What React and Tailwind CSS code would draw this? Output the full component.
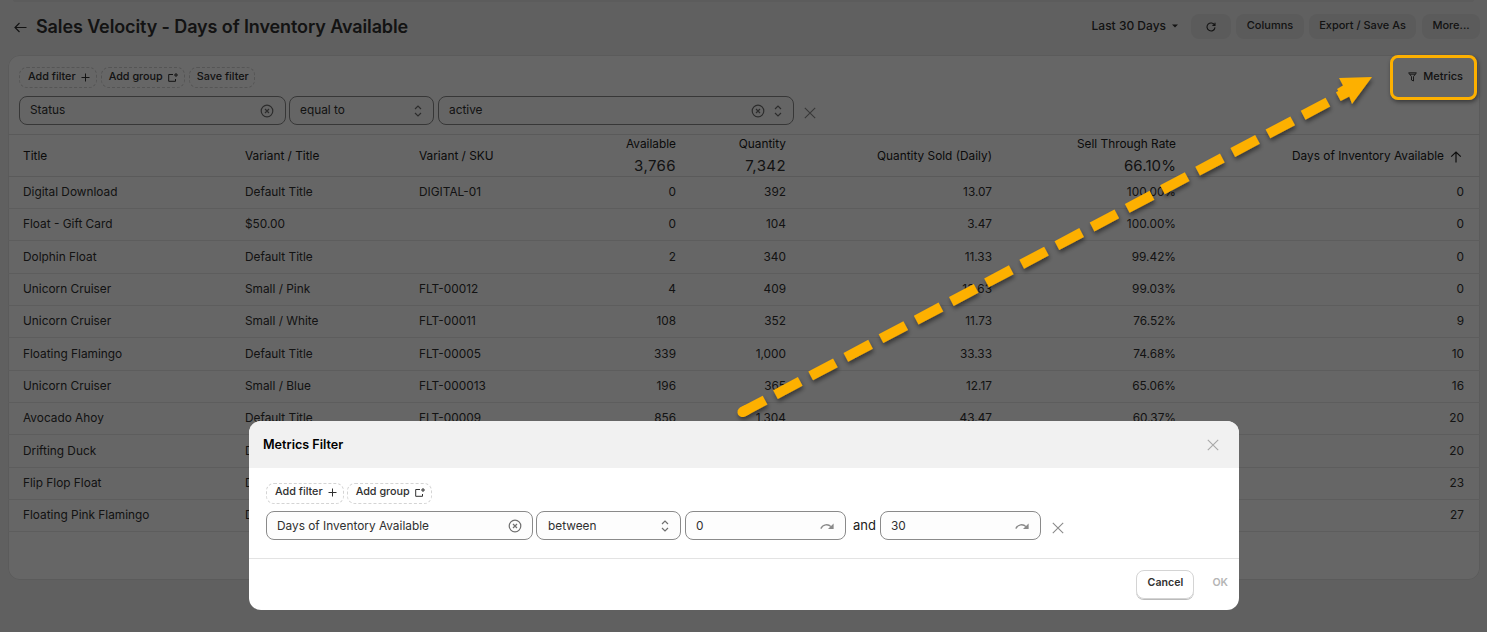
import React from "react";

const rows = [
  ["Digital Download", "Default Title", "DIGITAL-01", "0", "392", "13.07", "100.00%", "0"],
  ["Float - Gift Card", "$50.00", "", "0", "104", "3.47", "100.00%", "0"],
  ["Dolphin Float", "Default Title", "", "2", "340", "11.33", "99.42%", "0"],
  ["Unicorn Cruiser", "Small / Pink", "FLT-00012", "4", "409", "13.63", "99.03%", "0"],
  ["Unicorn Cruiser", "Small / White", "FLT-00011", "108", "352", "11.73", "76.52%", "9"],
  ["Floating Flamingo", "Default Title", "FLT-00005", "339", "1,000", "33.33", "74.68%", "10"],
  ["Unicorn Cruiser", "Small / Blue", "FLT-000013", "196", "365", "12.17", "65.06%", "16"],
  ["Avocado Ahoy", "Default Title", "FLT-00009", "856", "1,304", "43.47", "60.37%", "20"],
  ["Drifting Duck", "Default Title", "", "", "", "", "", "20"],
  ["Flip Flop Float", "Default Title", "", "", "", "", "", "23"],
  ["Floating Pink Flamingo", "Default Title", "", "", "", "", "", "27"],
];

const CircleX = ({ className = "" }) => (
  <svg width="14" height="14" viewBox="0 0 14 14" fill="none" stroke="currentColor" className={className}>
    <circle cx="7" cy="7" r="5.8" strokeWidth="1.2" />
    <path d="M5 5l4 4M9 5l-4 4" strokeWidth="1.2" />
  </svg>
);
const Updown = ({ className = "" }) => (
  <svg width="10" height="16" viewBox="0 0 10 16" fill="none" stroke="currentColor" strokeWidth="1.2" className={className}>
    <path d="M2 6l3-3 3 3M2 10l3 3 3-3" />
  </svg>
);
const Close = ({ size = 12, className = "" }) => (
  <svg width={size} height={size} viewBox="0 0 12 12" fill="none" stroke="currentColor" strokeWidth="1.1" className={className}>
    <path d="M.8.8l10.4 10.4M11.2.8L.8 11.2" />
  </svg>
);
const Plus = () => (
  <svg width="9" height="9" viewBox="0 0 9 9" fill="none" stroke="currentColor" strokeWidth="1" className="mr-px">
    <path d="M4.5.5v8M.5 4.5h8" />
  </svg>
);
const GroupIcon = () => (
  <svg width="10" height="9" viewBox="0 0 10 9" fill="none" stroke="currentColor" strokeWidth="1" className="mr-px">
    <path d="M5 1.5H.7v6.8h6.8V6M8 0v4M6 2h4" />
  </svg>
);
const Redo = () => (
  <svg width="14" height="8" viewBox="0 0 14 8" fill="none" className="text-[#8a8a8a]">
    <path d="M.8 6.6C3 2.2 8 1.6 11 4.6" stroke="currentColor" strokeWidth="1.3" />
    <path d="M13.6 1.4V7H8z" fill="currentColor" />
  </svg>
);

const DashBtn = ({ className = "", children }) => (
  <button className={`flex h-[21px] items-center gap-[5px] rounded-lg border border-dashed border-[#d4d4d4] pr-[5px] text-[10.8px] font-medium text-[#303030] ${className}`}>
    {children}
  </button>
);
const Field = ({ className, children }) => (
  <div className={`flex h-[29px] items-center rounded-lg border border-[#8a8a8a] bg-[#fdfdfd] text-[11.85px] text-[#303030] ${className}`}>
    {children}
  </div>
);
const Label = ({ children }) => <span className="pt-[2px]">{children}</span>;
const TopLabel = ({ children }) => <span>{children}</span>;
const TopBtn = ({ className = "", children }) => (
  <button className={`flex h-[25px] items-center justify-center rounded-lg bg-[#e3e3e3] text-[11px] font-medium text-[#303030] ${className}`}>
    {children}
  </button>
);

const Head = ({ title, total, spacing = "tracking-[0.4px]" }) => (
  <th className="px-4 pt-[2px] text-right align-middle font-normal">
    <div className="leading-[15px]">{title}</div>
    {total && <div className={`mt-[5px] text-[15px] leading-[18px] text-[#303030] ${spacing}`}>{total}</div>}
  </th>
);

export default function App() {
  return (
    <div className="relative h-[632px] w-full overflow-hidden bg-[#f1f1f1] text-[#303030] [font-family:Inter,sans-serif]">
      <div className="mx-[13px] h-[2px] rounded-b bg-[#e6e6e6]" />
      <header className="flex h-[53px] items-center pb-[5px] pl-[14px] pr-[7px]">
        <svg width="13" height="11" viewBox="0 0 13 11" fill="none" stroke="currentColor" strokeWidth="1.2" className="mr-[9px] mt-[2px]">
          <path d="M12.5 5.5H1M5.5 1L1 5.5 5.5 10" />
        </svg>
        <h1 className="text-[18px] font-semibold tracking-[-0.11px]">Sales Velocity - Days of Inventory Available</h1>
        <div className="ml-auto flex items-center">
          <span className="mr-[6px] text-xs font-medium">Last 30 Days</span>
          <svg width="6" height="4" viewBox="0 0 6 4" className="mr-[13px]" fill="currentColor"><path d="M0 .5h6L3 3.5z" /></svg>
          <TopBtn className="mr-[5px] mt-[1px] w-10">
            <svg width="10" height="10" viewBox="0 0 10 10" fill="none" stroke="currentColor" strokeWidth="1.1" className="mt-px">
              <path d="M8.6 3.2A4 4 0 1 0 9 5.4M9 .8v2.6H6.4" />
            </svg>
          </TopBtn>
          <TopBtn className="mr-[5px] w-[68px] pb-[2px]">Columns</TopBtn>
          <TopBtn className="mr-[6px] w-[107px] pb-[2px]">Export / Save As</TopBtn>
          <TopBtn className="w-[58px] pb-[2px]">More...</TopBtn>
        </div>
      </header>

      <section className="ml-2 mr-[7px] h-[525px] rounded-xl bg-white ring-1 ring-inset ring-[#e3e3e3]">
        <div className="flex h-[80px] justify-between border-b border-[#e1e1e1] pl-[11px] pr-[9px] pt-3">
          <div>
            <div className="flex gap-1">
              <DashBtn className="pl-2">Add filter <Plus /></DashBtn>
              <DashBtn className="pl-[7px]">Add group <GroupIcon /></DashBtn>
              <DashBtn className="pl-[7px]">Save filter</DashBtn>
            </div>
            <div className="mt-2 flex items-center">
              <Field className="w-[267px] justify-between pl-[10px] pr-[11px]"><TopLabel>Status</TopLabel><CircleX className="text-[#6f6f6f]" /></Field>
              <Field className="ml-[3px] w-[145px] justify-between pl-[10px] pr-[10px]"><TopLabel>equal to</TopLabel><Updown className="text-[#6f6f6f]" /></Field>
              <Field className="ml-1 w-[356px] pl-[10px] pr-[10px]">
                <TopLabel>active</TopLabel>
                <CircleX className="ml-auto mr-[8px] text-[#6f6f6f]" />
                <Updown className="text-[#6f6f6f]" />
              </Field>
              <Close className="ml-[10px] mt-[4px] text-[#8a8a8a]" />
            </div>
          </div>
          <button className="flex h-[22px] items-center gap-[6px] px-[8px] pb-[3px] text-[11px] font-medium">
            <svg width="9" height="10" viewBox="0 0 9 10" fill="none" stroke="currentColor" strokeWidth="0.9" className="mt-px">
              <path d="M.6.8h7.8L5.5 4.6V9L3.5 8V4.6zM1.6 2.2h5.8" />
            </svg>
            Metrics
          </button>
        </div>
        <table className="w-full table-fixed border-collapse text-[11.85px]">
          <colgroup>
            <col className="w-[222px]" />
            <col className="w-[174px]" />
            <col className="w-[176px]" />
            <col className="w-[112px]" />
            <col className="w-[110px]" />
            <col className="w-[206px]" />
            <col className="w-[184px]" />
            <col />
          </colgroup>
          <thead>
            <tr className="h-[41px] border-b border-[#e1e1e1] text-[#202020]">
              <th className="px-[15px] pt-[3px] text-left font-normal">Title</th>
              <th className="px-[15px] pt-[3px] text-left font-normal">Variant / Title</th>
              <th className="px-[15px] pt-[3px] text-left font-normal">Variant / SKU</th>
              <Head title="Available" total="3,766" />
              <Head title="Quantity" total="7,342" />
              <th className="px-4 pt-[3px] text-right font-normal">Quantity Sold (Daily)</th>
              <Head title="Sell Through Rate" total="66.10%" spacing="tracking-[0.1px]" />
              <th className="px-4 pt-[3px] text-right font-normal">
                <span className="inline-flex items-center gap-[6px]">
                  Days of Inventory Available
                  <svg width="12" height="12" viewBox="0 0 12 12" fill="none" stroke="currentColor" strokeWidth="1.2" className="mr-[2px]"><path d="M6 11.5V1M1.2 5.6L6 1l4.8 4.6" /></svg>
                </span>
              </th>
            </tr>
          </thead>
          <tbody>
            {rows.map((r, i) => (
              <tr key={i} className="h-[32.35px] border-b border-[#e8e8e8]">
                <td className="px-[15px] pt-[1.5px]">{r[0]}</td>
                <td className="px-[15px] pt-[1.5px]">{r[1]}</td>
                <td className="px-[15px] pt-[1.5px]">{r[2]}</td>
                <td className="px-4 pt-[1.5px] text-right">{r[3]}</td>
                <td className="px-4 pt-[1.5px] text-right">{r[4]}</td>
                <td className="px-4 pt-[1.5px] text-right">{r[5]}</td>
                <td className="px-4 pt-[1.5px] text-right">{r[6]}</td>
                <td className="px-4 pt-[1.5px] text-right">{r[7]}</td>
              </tr>
            ))}
          </tbody>
        </table>
      </section>

      <div className="absolute inset-0 bg-black/60" />

      <div className="absolute left-[1390px] top-[55px] h-[45px] w-[87px] rounded-lg border-[3px] border-[#fdb000] shadow-[1px_2px_4px_rgba(0,0,0,0.45)]" />

      <svg className="absolute left-0 top-0" width="1487" height="632" viewBox="0 0 1487 632" fill="none">
        <defs>
          <filter id="s" x="-5%" y="-5%" width="110%" height="115%">
            <feDropShadow dx="1" dy="3" stdDeviation="2" floodColor="#000" floodOpacity="0.45" />
          </filter>
        </defs>
        <g filter="url(#s)">
          <path d="M742.5 412 L1349 91" stroke="#fdb000" strokeWidth="10" strokeDasharray="28 11.8" strokeDashoffset="2.5" strokeLinecap="butt" />
          <path d="M742.5 412l4-2" stroke="#fdb000" strokeWidth="10" strokeLinecap="round" />
          <path d="M1372 77L1339 78L1343 85.500L1337 89L1342 96.500L1348 93L1352 104Z" fill="#fdb000" />
        </g>
      </svg>

      <div className="absolute left-[249px] top-[421px] h-[189px] w-[990px] overflow-hidden rounded-xl bg-white">
        <div className="flex h-[47px] items-center justify-between bg-[#f1f1f1] pl-[14px] pr-5">
          <h2 className="pt-px text-[12.6px] font-semibold text-black">Metrics Filter</h2>
          <Close size={12} className="mr-0 text-[#a8a8a8]" />
        </div>
        <div className="h-[91px] border-b border-[#e3e3e3] px-[17px] pt-[15px]">
          <div className="flex gap-[3px]">
            <DashBtn className="pb-[2px] pl-2">Add filter <Plus /></DashBtn>
            <DashBtn className="pb-[2px] pl-2">Add group <GroupIcon /></DashBtn>
          </div>
          <div className="mt-[7px] flex items-center">
            <Field className="w-[267px] justify-between pl-[10px] pr-[10px]"><Label>Days of Inventory Available</Label><CircleX className="text-[#6f6f6f]" /></Field>
            <Field className="ml-[3px] w-[145px] justify-between pl-[11px] pr-[10px]"><Label>between</Label><Updown className="text-[#6f6f6f]" /></Field>
            <Field className="ml-1 w-[161px] justify-between pl-[10px] pr-[11px]"><Label>0</Label><Redo /></Field>
            <span className="ml-[7px] mr-[4px] pt-px text-[13px] text-[#202020]">and</span>
            <Field className="w-[161px] justify-between pl-[10px] pr-[11px]"><Label>30</Label><Redo /></Field>
            <Close className="ml-[11px] mt-[4px] text-[#8a8a8a]" />
          </div>
        </div>
        <div className="flex h-[51px] items-center justify-end pb-[1px] pr-[11px]">
          <button className="h-[29px] w-[58px] rounded-lg border border-[#d4d4d4] pb-[2px] text-[10.6px] font-semibold text-[#303030] shadow-[0_1px_0_#bbb]">Cancel</button>
          <span className="ml-[18px] pb-[2px] text-[10.6px] font-semibold text-[#b5b5b5]">OK</span>
        </div>
      </div>
    </div>
  );
}
